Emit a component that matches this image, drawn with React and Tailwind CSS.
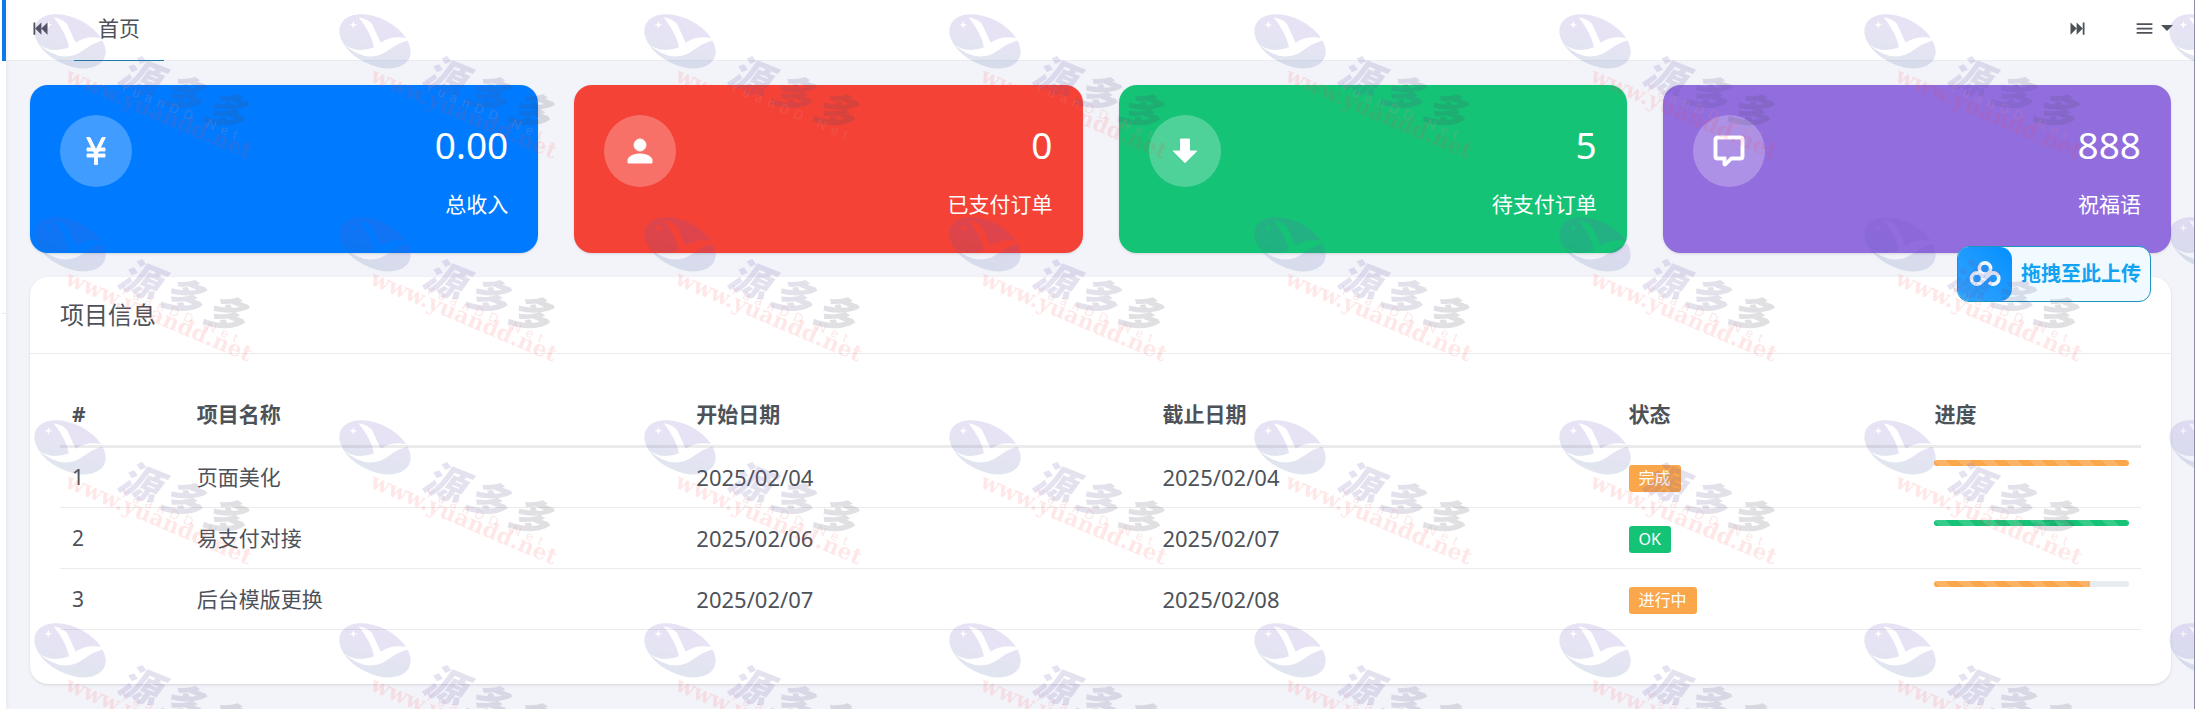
import { useId } from "react";

const icons = {
  skipBackward: "M20,5V19L13,12M6,5V19H4V5M13,5V19L6,12",
  skipForward: "M4,5V19L11,12M18,5V19H20V5M11,5V19L18,12",
  menu: "M3,6H21V8H3V6M3,11H21V13H3V11M3,16H21V18H3V16Z",
  yen: "M11,21V16H6V14H11V13.71L10.16,12H6V10H9.19L5.77,3H8L12,11.18L16,3H18.23L14.81,10H18V12H13.84L13,13.71V14H18V16H13V21H11Z",
  account:
    "M12,4A4,4 0 0,1 16,8A4,4 0 0,1 12,12A4,4 0 0,1 8,8A4,4 0 0,1 12,4M12,14C16.42,14 20,15.79 20,18V20H4V18C4,15.79 7.58,14 12,14Z",
  arrowDown: "M9,4H15V12H19.84L12,19.84L4.16,12H9V4Z",
  comment:
    "M9,22A1,1 0 0,1 8,21V18H4A2,2 0 0,1 2,16V4C2,2.89 2.9,2 4,2H20A2,2 0 0,1 22,4V16A2,2 0 0,1 20,18H13.9L10.2,21.71C10,21.9 9.75,22 9.5,22V22H9M10,16V19.08L13.08,16H20V4H4V16H10Z",
};

const stats = [
  { label: "总收入", value: "0.00", icon: "yen", color: "bg-[#007bff]" },
  { label: "已支付订单", value: "0", icon: "account", color: "bg-[#f44236]" },
  { label: "待支付订单", value: "5", icon: "arrowDown", color: "bg-[#15c377]" },
  { label: "祝福语", value: "888", icon: "comment", color: "bg-[#926dde]" },
];

const projects = [
  {
    id: 1,
    name: "页面美化",
    start: "2025/02/04",
    end: "2025/02/04",
    status: "完成",
    color: "bg-[#faa64b]",
    progress: 100,
  },
  {
    id: 2,
    name: "易支付对接",
    start: "2025/02/06",
    end: "2025/02/07",
    status: "OK",
    color: "bg-[#15c377]",
    progress: 100,
  },
  {
    id: 3,
    name: "后台模版更换",
    start: "2025/02/07",
    end: "2025/02/08",
    status: "进行中",
    color: "bg-[#faa64b]",
    progress: 80,
  },
];

function Icon({ name, className }) {
  return (
    <svg viewBox="0 0 24 24" fill="currentColor" className={className} aria-hidden="true">
      <path d={icons[name]} />
    </svg>
  );
}

function Header() {
  return (
    <header className="flex h-[61px] items-stretch border-b border-[#e9ecf2] bg-white pl-6 pr-[21px]">
      <button type="button" aria-label="向左" className="flex items-center pb-1">
        <Icon name="skipBackward" className="size-[21px]" />
      </button>
      <nav className="ml-[23px] flex">
        <a
          href="#home"
          className="-mb-px flex items-center border-b border-[#1c7aa8] px-6 pb-1 text-[21px] leading-8"
        >
          首页
        </a>
      </nav>
      <div className="ml-auto flex items-center gap-[46px] pb-1">
        <button type="button" aria-label="向右">
          <Icon name="skipForward" className="size-[21px]" />
        </button>
        <button type="button" aria-label="菜单" className="flex items-center gap-[6px]">
          <Icon name="menu" className="size-[21px]" />
          <svg viewBox="0 0 12 6" fill="currentColor" className="h-[6px] w-3" aria-hidden="true">
            <path d="M0 0H12L6 6Z" />
          </svg>
        </button>
      </div>
    </header>
  );
}

function StatCard({ label, value, icon, color }) {
  return (
    <div
      className={`flex h-[168px] items-start justify-between rounded-[18px] p-[30px] text-white shadow-sm ${color}`}
    >
      <span className="flex size-[72px] items-center justify-center rounded-full bg-white/25">
        <Icon name={icon} className="size-9 stroke-current stroke-[0.6]" />
      </span>
      <div className="text-right">
        <p className="text-[37px] leading-[60px]">{value}</p>
        <p className="text-[21px] leading-[58px]">{label}</p>
      </div>
    </div>
  );
}

function Progress({ value, color }) {
  return (
    <div
      role="progressbar"
      aria-valuenow={value}
      className="h-[6px] overflow-hidden rounded-full bg-[#e9ecef]"
    >
      <div
        className={`h-full bg-[linear-gradient(45deg,rgba(255,255,255,.15)_25%,transparent_25%,transparent_50%,rgba(255,255,255,.15)_50%,rgba(255,255,255,.15)_75%,transparent_75%,transparent)] bg-size-[24px_24px] ${color}`}
        style={{ width: `${value}%` }}
      />
    </div>
  );
}

function ProjectTable() {
  return (
    <table className="mb-6 w-full table-fixed text-left text-[21px] leading-[30px]">
      <colgroup>
        <col className="w-[6%]" />
        <col className="w-[24%]" />
        <col className="w-[22.4%]" />
        <col className="w-[22.4%]" />
        <col className="w-[14.7%]" />
        <col className="w-[10.5%]" />
      </colgroup>
      <thead>
        <tr className="h-[62px] border-b-3 border-[#ebebeb]">
          <th className="px-3 font-bold">#</th>
          <th className="px-3 font-bold">项目名称</th>
          <th className="px-3 font-bold">开始日期</th>
          <th className="px-3 font-bold">截止日期</th>
          <th className="px-3 font-bold">状态</th>
          <th className="px-3 font-bold">进度</th>
        </tr>
      </thead>
      <tbody>
        {projects.map((p) => (
          <tr key={p.id} className="h-[61px] border-b border-[#ebebeb]">
            <td className="px-3">{p.id}</td>
            <td className="px-3">{p.name}</td>
            <td className="px-3 text-[22px]">{p.start}</td>
            <td className="px-3 text-[22px]">{p.end}</td>
            <td className="px-3">
              <span
                className={`inline-block rounded-[3px] px-[10px] align-middle text-[16px] leading-[27px] text-white ${p.color}`}
              >
                {p.status}
              </span>
            </td>
            <td className="px-3 pt-3 align-top">
              <Progress value={p.progress} color={p.color} />
            </td>
          </tr>
        ))}
      </tbody>
    </table>
  );
}

function UploadButton() {
  return (
    <button
      type="button"
      className="absolute top-[246px] right-[43px] flex h-14 items-center overflow-hidden rounded-xl border border-[#1b94c4] bg-[#f0faff] pr-[9px] text-[20px] font-bold text-[#12a3f2]"
    >
      <span className="mr-[9px] flex h-full w-[54px] items-center justify-center rounded-r-xl bg-linear-to-tr from-[#2fa4ff] to-[#0090ff]">
        <svg viewBox="0 0 32 26" fill="none" stroke="#f2f8ff" className="h-[26px] w-8" aria-hidden="true">
          <circle cx="16" cy="7.5" r="5.6" strokeWidth="3.6" />
          <circle cx="8" cy="17.5" r="5.6" strokeWidth="3.6" />
          <path d="M12.4 21L20.2 13.6A5.6 5.6 0 1 1 20 21.2" strokeWidth="3.6" />
        </svg>
      </span>
      拖拽至此上传
    </button>
  );
}

// tiled site mark that lies over the whole page
function Watermark() {
  const id = useId();

  return (
    <svg className="pointer-events-none absolute inset-0 h-full w-full" aria-hidden="true">
      <defs>
        <linearGradient id={`${id}-globe`} x1="0" y1="0" x2="0.3" y2="1">
          <stop offset="0.4" stopColor="#6a4fc0" />
          <stop offset="1" stopColor="#3c5a9a" />
        </linearGradient>
        <linearGradient id={`${id}-name`} x1="0" y1="0" x2="1" y2="0">
          <stop offset="0" stopColor="#6a55b8" />
          <stop offset="1" stopColor="#44444c" />
        </linearGradient>
        <mask id={`${id}-y`} maskUnits="userSpaceOnUse" x="0" y="0" width="280" height="260">
          <rect width="280" height="260" fill="white" />
          <path
            d="M36 146Q78 182 132 160Q124 118 86 70Q118 76 128 94L152 146Q192 120 244 136Q206 146 176 168Q112 216 36 146Z"
            fill="black"
          />
          <path d="M70 80L73 90L82 92L73 95L70 104L67 95L58 92L67 90Z" fill="black" />
        </mask>
        <pattern id={`${id}-tile`} width="305" height="203" patternUnits="userSpaceOnUse">
          <g
            transform="translate(25 -6) scale(0.3333)"
            opacity="0.16"
            mask={`url(#${id}-y)`}
          >
            <ellipse
              cx="135"
              cy="142"
              rx="115"
              ry="70"
              transform="rotate(27 135 142)"
              fill={`url(#${id}-globe)`}
            />
          </g>
          <text
            transform="translate(116 82) rotate(22)"
            fill={`url(#${id}-name)`}
            opacity="0.17"
            className="font-['Noto_Sans_CJK_SC',sans-serif] text-[40px] font-black tracking-[6px] italic"
          >
            源多多
          </text>
          <text
            transform="translate(119 90) rotate(23)"
            fill="#e88"
            opacity="0.2"
            className="font-['Liberation_Sans',sans-serif] text-[13px] tracking-[6px]"
          >
            YuanDD Net
          </text>
          <text
            transform="translate(64 81) rotate(23)"
            fill="#ff3b3b"
            opacity="0.12"
            className="font-['DejaVu_Serif',serif] text-[22px] font-bold"
          >
            www.yuandd.net
          </text>
        </pattern>
      </defs>
      <rect width="100%" height="100%" fill={`url(#${id}-tile)`} />
    </svg>
  );
}

export default function App() {
  return (
    <div className="relative flex min-h-screen overflow-hidden border-r border-[#8d8da6] bg-[#f3f4fa] font-['Noto_Sans','Noto_Sans_CJK_SC',sans-serif] text-[#4d5259]">
      {/* Edge of the collapsed sidebar */}
      <aside className="z-10 flex w-[6px] shrink-0 flex-col bg-white pl-[2px] shadow-[0_0_6px_rgba(0,0,0,0.08)]">
        <div className="h-[61px] bg-[#0b79ea]" />
        <div className="h-[253px] border-b border-[#ebebeb]" />
      </aside>

      <div className="min-w-0 flex-1">
        <Header />

        <main className="flex flex-col gap-6 pt-6 pb-5 pl-6 pr-[23px]">
          <section className="grid grid-cols-4 gap-9">
            {stats.map((s) => (
              <StatCard key={s.label} {...s} />
            ))}
          </section>

          <section className="rounded-[18px] bg-white shadow-sm">
            <h4 className="border-b border-[#ebebeb] px-[30px] pt-[21px] pb-[22px] text-[24px] leading-[33px]">
              项目信息
            </h4>
            <div className="p-[30px]">
              <ProjectTable />
            </div>
          </section>
        </main>
      </div>

      <UploadButton />
      <Watermark />
    </div>
  );
}
